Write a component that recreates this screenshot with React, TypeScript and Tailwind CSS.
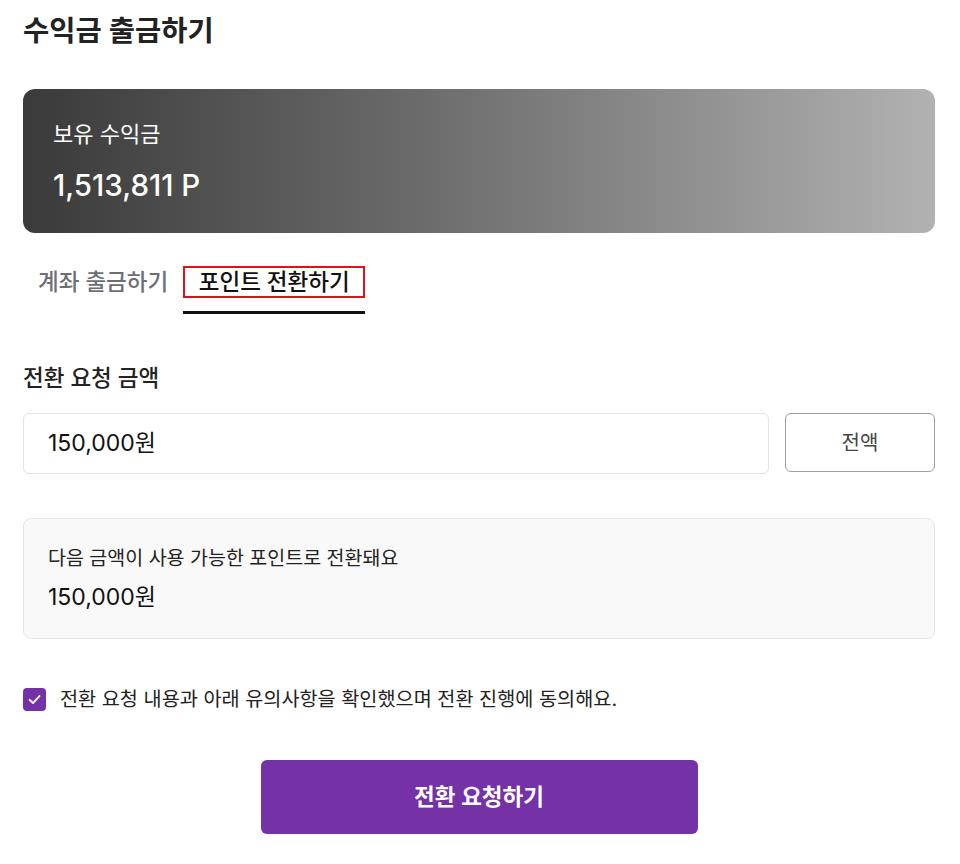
import { useState } from "react";

const font = "font-['Inter','Noto_Sans_CJK_KR',sans-serif]";

export default function App() {
  const [tab, setTab] = useState<"account" | "point">("point");
  const [agree, setAgree] = useState(true);

  return (
    <div className={`${font} w-full bg-white pl-[23px] pr-[25px] pb-8 text-[#222]`}>
      <h1 className="pt-[12px] text-[28.5px] font-semibold leading-[38px] text-[#222]">수익금 출금하기</h1>

      <div className="mt-[39px] flex h-[144px] flex-col rounded-xl bg-gradient-to-r from-[#3a3a3a] to-[#b2b2b2] px-[30px] pt-[31px] text-white">
        <p className="text-[22px] leading-[28px]">보유 수익금</p>
        <p className="mt-[19px] text-[29.5px] font-medium leading-[36px]">1,513,811 P</p>
      </div>

      <div className="mt-[33px] flex items-start gap-[15px] pl-[15px]">
        <button
          type="button"
          onClick={() => setTab("account")}
          className={`pb-[13px] text-[22.5px] font-medium leading-[32px] ${tab === "account" ? "border-b-[3px] border-[#111] text-[#111]" : "border-b-[3px] border-transparent text-[#6e6e77]"}`}
        >
          계좌 출금하기
        </button>
        <button
          type="button"
          onClick={() => setTab("point")}
          className={`w-[182px] pb-[13px] text-[22.5px] font-medium ${tab === "point" ? "border-b-[3px] border-[#111] text-[#111]" : "border-b-[3px] border-transparent text-[#6e6e77]"}`}
        >
          <span className="block h-[32px] border-2 border-[#d9141b] leading-[28px]">포인트 전환하기</span>
        </button>
      </div>

      <p className="mt-[49px] text-[22.5px] font-medium leading-[30px] text-[#222]">전환 요청 금액</p>

      <div className="mt-[20px] flex items-start gap-4">
        <div className="flex h-[61px] flex-1 items-center rounded-md border border-[#e4e4e7] px-6 text-[23px] text-[#111]">
          150,000원
        </div>
        <button
          type="button"
          className="h-[59px] w-[150px] rounded-md border border-[#9c9ca4] text-[20px] text-[#444]"
        >
          전액
        </button>
      </div>

      <div className="mt-[44px] rounded-lg border border-[#e6e6e6] bg-[#f9f9f9] px-6 pt-[25px] pb-[25px]">
        <p className="text-[19.5px] leading-[28px] text-[#222]">다음 금액이 사용 가능한 포인트로 전환돼요</p>
        <p className="mt-[9px] text-[23px] leading-[32px] text-[#111]">150,000원</p>
      </div>

      <label className="mt-[47px] flex cursor-pointer items-center gap-[14px]">
        <input type="checkbox" checked={agree} onChange={(e) => setAgree(e.target.checked)} className="sr-only" />
        <span className={`flex h-[23px] w-[23px] items-center justify-center rounded-[4px] ${agree ? "bg-[#7532a8]" : "border border-[#aaa] bg-white"}`}>
          {agree && (
            <svg width="15" height="15" viewBox="0 0 14 14" fill="none">
              <path d="M2.5 7.3 5.6 10.3 11.6 3.8" stroke="white" strokeWidth="1.8" strokeLinecap="round" strokeLinejoin="round" />
            </svg>
          )}
        </span>
        <span className="text-[19.7px] leading-[26px] text-[#222]">전환 요청 내용과 아래 유의사항을 확인했으며 전환 진행에 동의해요.</span>
      </label>

      <div className="mt-[48px] flex justify-center">
        <button type="button" className="h-[74px] w-[437px] rounded-md bg-[#7531a6] text-[22.5px] font-semibold text-white">
          전환 요청하기
        </button>
      </div>
    </div>
  );
}
